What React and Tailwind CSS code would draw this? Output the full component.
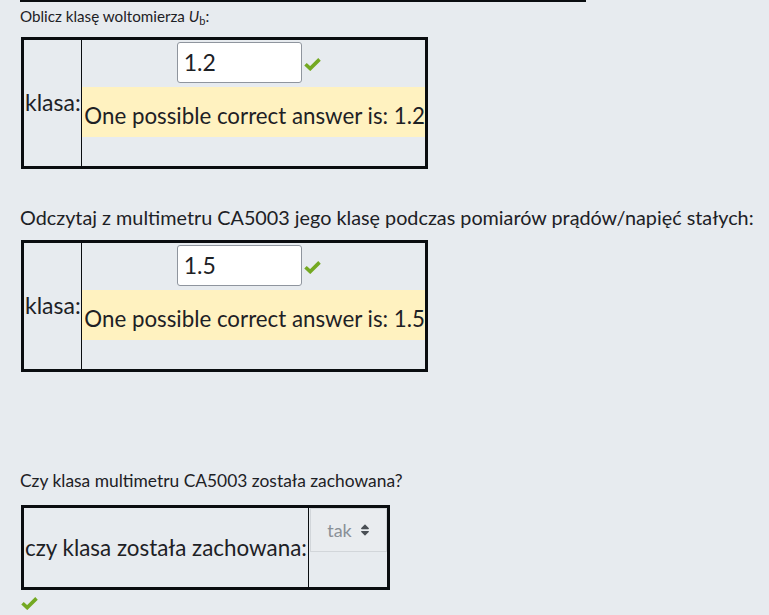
import React from "react";
import { FaSort } from "react-icons/fa";

function Check({ className = "" }) {
  return (
    <svg viewBox="0 0 17 14" width="17" height="14" className={className}>
      <path d="M1.5 7.2 L6.2 11.6 L15.5 2.4" fill="none" stroke="#74a922" strokeWidth="3.6" strokeLinejoin="miter" />
    </svg>
  );
}

function AnswerTable({ value }) {
  return (
    <div className="ml-[21px] w-[407px] h-[132px] border-[3px] border-[#0a0d10] flex">
      <div className="w-[59px] border-r border-[#0a0d10] flex items-center pl-[1px]">
        <span className="text-[23px] leading-[28px] -mt-[2px]">klasa:</span>
      </div>
      <div className="flex-1 flex flex-col">
        <div className="h-[47px] flex items-start justify-center pt-[2px] pr-[10px]">
          <div className="w-[125px] h-[41px] bg-white border border-[#8f959e] rounded-[3px] flex items-center pl-[6px] text-[23px]">
            {value}
          </div>
          <Check className="ml-[2px] mt-[15px]" />
        </div>
        <div className="h-[50px] bg-[#fff2c0] pt-[15px] pl-[2px] text-[22.3px] leading-[28px] whitespace-nowrap">
          One possible correct answer is: {value}
        </div>
        <div className="flex-1" />
      </div>
    </div>
  );
}

export default function App() {
  return (
    <div
      className="min-h-[615px] w-[769px] bg-[#e7ebef] text-[#1d2125] overflow-hidden"
      style={{ fontFamily: "Lato, 'Open Sans', sans-serif" }}
    >
      <div className="ml-[20px] w-[566px] h-[2px] bg-[#0a0d10]" />
      <p className="ml-[20px] mt-[5px] text-[15.2px] leading-[18px]">
        Oblicz klasę woltomierza <i>U</i>
        <sub className="text-[11px]">b</sub>:
      </p>
      <div className="mt-[12px]">
        <AnswerTable value="1.2" />
      </div>
      <p className="ml-[20px] mt-[37px] text-[19.8px] leading-[23px] whitespace-nowrap">
        Odczytaj z multimetru CA5003 jego klasę podczas pomiarów prądów/napięć stałych:
      </p>
      <div className="mt-[11px]">
        <AnswerTable value="1.5" />
      </div>
      <p className="ml-[20px] mt-[99px] text-[17.4px] leading-[20px] whitespace-nowrap">
        Czy klasa multimetru CA5003 została zachowana?
      </p>
      <div className="ml-[21px] mt-[14px] w-[369px] h-[85px] border-[3px] border-[#0a0d10] flex">
        <div className="w-[285px] border-r border-[#0a0d10] flex items-center pl-[1px]">
          <span className="text-[22.4px] leading-[28px] whitespace-nowrap">czy klasa została zachowana:</span>
        </div>
        <div className="flex-1 pl-[1px]">
          <div className="w-[77px] h-[44px] border border-[#d2d6da] bg-[#e9ecef] flex items-center justify-center gap-[8px] text-[18px] text-[#8a9097]">
            <span>tak</span>
            <FaSort className="text-[#4a4f55]" style={{ width: 10, height: 14 }} />
          </div>
        </div>
      </div>
      <div className="ml-[21px] mt-[6px] flex">
        <Check />
      </div>
    </div>
  );
}
